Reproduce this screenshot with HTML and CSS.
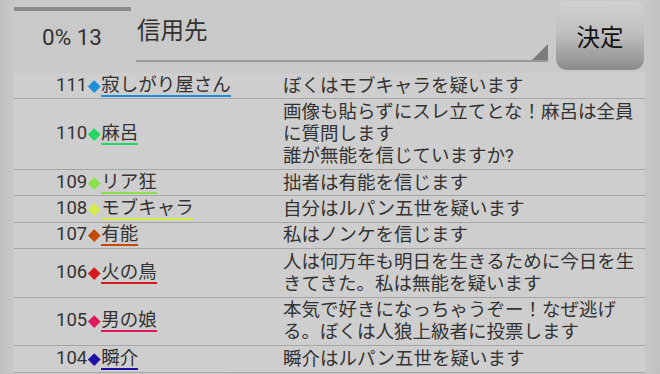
FILE: index.html
```html
<!DOCTYPE html>
<html lang="ja">
<head>
    <meta charset="UTF-8">
    <meta name="viewport" content="width=device-width, initial-scale=1.0">
    <title>投票</title>
    <link rel="stylesheet" href="styles.css">
</head>
<body>
    <div class="screen">
        <div class="top">
            <div class="status">
                <div class="bar"></div>
                <div class="count">0% 13</div>
            </div>
            <div class="spinner">
                <span class="spinner-text">信用先</span>
                <span class="spinner-arrow"></span>
            </div>
            <button class="decide">決定</button>
        </div>
        <div class="log">
            <div class="row">
                <div class="who"><span class="no">111</span><i class="dia c-blue"></i><span class="name c-blue">寂しがり屋さん</span></div>
                <div class="msg">ぼくはモブキャラを疑います</div>
            </div>
            <div class="row">
                <div class="who"><span class="no">110</span><i class="dia c-green"></i><span class="name c-green">麻呂</span></div>
                <div class="msg">画像も貼らずにスレ立てとな！麻呂は全員<br>に質問します<br>誰が無能を信じていますか?</div>
            </div>
            <div class="row">
                <div class="who"><span class="no">109</span><i class="dia c-lime"></i><span class="name c-lime">リア狂</span></div>
                <div class="msg">拙者は有能を信じます</div>
            </div>
            <div class="row">
                <div class="who"><span class="no">108</span><i class="dia c-yellow"></i><span class="name c-yellow">モブキャラ</span></div>
                <div class="msg">自分はルパン五世を疑います</div>
            </div>
            <div class="row">
                <div class="who"><span class="no">107</span><i class="dia c-orange"></i><span class="name c-orange">有能</span></div>
                <div class="msg">私はノンケを信じます</div>
            </div>
            <div class="row">
                <div class="who"><span class="no">106</span><i class="dia c-red"></i><span class="name c-red">火の鳥</span></div>
                <div class="msg">人は何万年も明日を生きるために今日を生<br>きてきた。私は無能を疑います</div>
            </div>
            <div class="row">
                <div class="who"><span class="no">105</span><i class="dia c-pink"></i><span class="name c-pink">男の娘</span></div>
                <div class="msg">本気で好きになっちゃうぞー！なぜ逃げ<br>る。ぼくは人狼上級者に投票します</div>
            </div>
            <div class="row">
                <div class="who"><span class="no">104</span><i class="dia c-navy"></i><span class="name c-navy">瞬介</span></div>
                <div class="msg">瞬介はルパン五世を疑います</div>
            </div>
        </div>
    </div>
</body>
</html>
```

FILE: styles.css
```css
html, body {
    margin: 0;
    height: 100%;
    overflow: hidden;
}
body {
    font-family: Roboto, "Noto Sans CJK JP", sans-serif;
    color: #333;
    background: linear-gradient(90deg, #c0c0c0 0, #c9c9c9 14px, #cacaca 640px, #c0c0c0 660px);
}
.screen {
    width: 660px;
    height: 374px;
}
.top {
    display: flex;
    height: 73px;
    padding-left: 14px;
}
.status {
    width: 117px;
}
.bar {
    margin-top: 7px;
    height: 4px;
    background-color: #8c8c8c;
}
.count {
    padding: 13px 0 0 28px;
    font-size: 22.5px;
    line-height: 26px;
}
.spinner {
    position: relative;
    width: 412px;
    height: 60px;
    margin-left: 5px;
    border-bottom: 2px solid #999;
}
.spinner-text {
    display: block;
    padding: 16px 0 0 1px;
    font-size: 23.5px;
    line-height: 30px;
}
.spinner-arrow {
    position: absolute;
    right: 0;
    bottom: 0;
    width: 0;
    height: 0;
    border-left: 16px solid transparent;
    border-bottom: 16px solid #7c7c7c;
}
.decide {
    width: 88px;
    height: 69px;
    margin: 1px 0 0 8px;
    padding: 0;
    border: none;
    border-radius: 11px;
    background: linear-gradient(#d2d2d2 0%, #bdbdbd 50%, #8a8a8a 100%);
    font-family: Roboto, "Noto Sans CJK JP", sans-serif;
    font-size: 23.5px;
    color: #111;
}
.log {
    margin: 0 15px 0 14px;
    background-color: #cecece;
}
.row {
    display: grid;
    grid-template-columns: 269px 1fr;
    border-bottom: 1px solid #a6a6a6;
}
.who {
    align-self: center;
    padding-left: 42px;
    font-size: 18.5px;
    line-height: 20px;
    white-space: nowrap;
}
.dia {
    display: inline-block;
    width: 8.5px;
    height: 8.5px;
    margin: 0 3px 0 2.5px;
    vertical-align: middle;
    transform: rotate(45deg);
    background-color: currentColor;
}
.name {
    display: inline-block;
    border-bottom: 2px solid currentColor;
    color: #333;
}
.msg {
    padding: 1.5px 0;
    font-size: 18.5px;
    line-height: 22.3px;
    white-space: nowrap;
}
.dia.c-blue, .name.c-blue { border-color: #1c8fd8; color: #1c8fd8; }
.dia.c-green, .name.c-green { border-color: #20d862; color: #20d862; }
.dia.c-lime, .name.c-lime { border-color: #8ae24a; color: #8ae24a; }
.dia.c-yellow, .name.c-yellow { border-color: #d6ea4a; color: #d6ea4a; }
.dia.c-orange, .name.c-orange { border-color: #c24a02; color: #c24a02; }
.dia.c-red, .name.c-red { border-color: #d41a1c; color: #d41a1c; }
.dia.c-pink, .name.c-pink { border-color: #e0185c; color: #e0185c; }
.dia.c-navy, .name.c-navy { border-color: #2010a8; color: #2010a8; }
.name.c-blue, .name.c-green, .name.c-lime, .name.c-yellow,
.name.c-orange, .name.c-red, .name.c-pink, .name.c-navy {
    color: #333;
}
```
